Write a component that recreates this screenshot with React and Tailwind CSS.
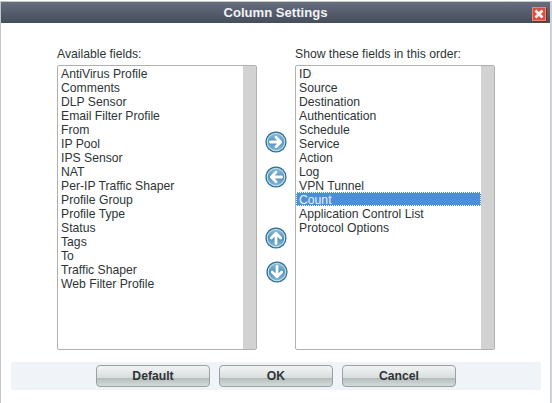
import React from 'react';

const available = [
  'AntiVirus Profile', 'Comments', 'DLP Sensor', 'Email Filter Profile', 'From', 'IP Pool',
  'IPS Sensor', 'NAT', 'Per-IP Traffic Shaper', 'Profile Group', 'Profile Type', 'Status',
  'Tags', 'To', 'Traffic Shaper', 'Web Filter Profile',
];

const shown = [
  'ID', 'Source', 'Destination', 'Authentication', 'Schedule', 'Service', 'Action', 'Log',
  'VPN Tunnel', 'Count', 'Application Control List', 'Protocol Options',
];

// round blue arrow button, dir is the rotation in degrees
function ArrowIcon({ dir, id }) {
  return (
    <svg width="22" height="22" viewBox="0 0 22 22" className="block">
      <defs>
        <linearGradient id={id} x1="0" y1="0" x2="0" y2="1">
          <stop offset="0" stopColor="#8fbdd6" />
          <stop offset="0.5" stopColor="#4f93ba" />
          <stop offset="1" stopColor="#7fb6d2" />
        </linearGradient>
      </defs>
      <circle cx="11" cy="11" r="10.6" fill="#2c6f98" />
      <circle cx="11" cy="11" r="9.3" fill="#c5deeb" />
      <circle cx="11" cy="11" r="8.2" fill={`url(#${id})`} />
      <g transform={`rotate(${dir} 11 11)`}>
        <path d="M5.4 11H15.4M11 6.2L15.8 11L11 15.8" fill="none" stroke="#ffffff" strokeWidth="2.8" strokeLinecap="round" strokeLinejoin="round" />
      </g>
    </svg>
  );
}

function ListBox({ items, selected }) {
  return (
    <div className="flex w-[200px] h-[285px] border border-[#b0b0b0] rounded-[2px] bg-white overflow-hidden">
      <div className="flex-1 min-w-0">
        {items.map(item => (
          <div
            key={item}
            className={`h-[14px] leading-[16px] pl-[3px] text-[12.2px] ${
              item === selected
                ? 'bg-[#4a90d9] text-[#e8f0fa] outline-1 outline-dotted -outline-offset-1 outline-white'
                : 'text-[#2e3436]'
            }`}
          >
            {item}
          </div>
        ))}
      </div>
      <div className="w-[13px] bg-[#d2d2d2]" />
    </div>
  );
}

function FooterButton({ label }) {
  return (
    <button className="w-[114px] h-[22px] rounded-[4px] border border-[#9a9fa1] bg-[linear-gradient(to_bottom,#f3f5f5_0%,#d9dddd_58%,#b3bdbc_60%,#d6dcda_100%)] text-[12.2px] font-bold text-[#2e3436]">
      {label}
    </button>
  );
}

export default function App() {
  return (
    <div className="w-[552px] h-[403px] bg-white font-['Liberation_Sans',Arial,sans-serif] pt-px">
      <div className="h-[402px] border-l border-r-2 border-t border-[#c4c6c8] border-r-[#d0d2d4] flex flex-col">
        {/* Title bar */}
        <div className="relative h-[21px] bg-gradient-to-b from-[#656d7e] to-[#464d5b] flex items-center justify-center">
          <span className="text-[13.1px] font-bold text-[#f2f3f5]">Column Settings</span>
          <div className="absolute right-[4px] top-[5px] w-[14px] h-[14px] border border-[#e58a7c] bg-[#d8503e] flex items-center justify-center shadow-[1px_1px_0_#7c2a22]">
            <svg width="10" height="10" viewBox="0 0 10 10">
              <path d="M1.5 1.5L8.5 8.5M8.5 1.5L1.5 8.5" stroke="#fdf1ee" strokeWidth="2.8" />
            </svg>
          </div>
        </div>

        {/* Lists */}
        <div className="flex pl-[56px] pt-[23px]">
          <div className="w-[200px]">
            <div className="h-[19px] text-[12.2px] leading-[17px] text-[#2e3436]">Available fields:</div>
            <ListBox items={available} />
          </div>
          <div className="w-[38px] flex flex-col items-center pt-[85px]">
            <ArrowIcon dir={0} id="a1" />
            <div className="mt-[13px]"><ArrowIcon dir={180} id="a2" /></div>
            <div className="mt-[39px]"><ArrowIcon dir={-90} id="a3" /></div>
            <div className="mt-[12px] ml-[2px]"><ArrowIcon dir={90} id="a4" /></div>
          </div>
          <div className="w-[200px]">
            <div className="h-[19px] text-[12.2px] leading-[17px] text-[#2e3436] whitespace-nowrap">Show these fields in this order:</div>
            <ListBox items={shown} selected="Count" />
          </div>
        </div>

        {/* Footer */}
        <div className="mt-[12px] ml-[10px] w-[530px] h-[28px] bg-[#f0f4f9] flex items-center justify-center gap-[9px]">
          <FooterButton label="Default" />
          <FooterButton label="OK" />
          <FooterButton label="Cancel" />
        </div>
      </div>
    </div>
  );
}
